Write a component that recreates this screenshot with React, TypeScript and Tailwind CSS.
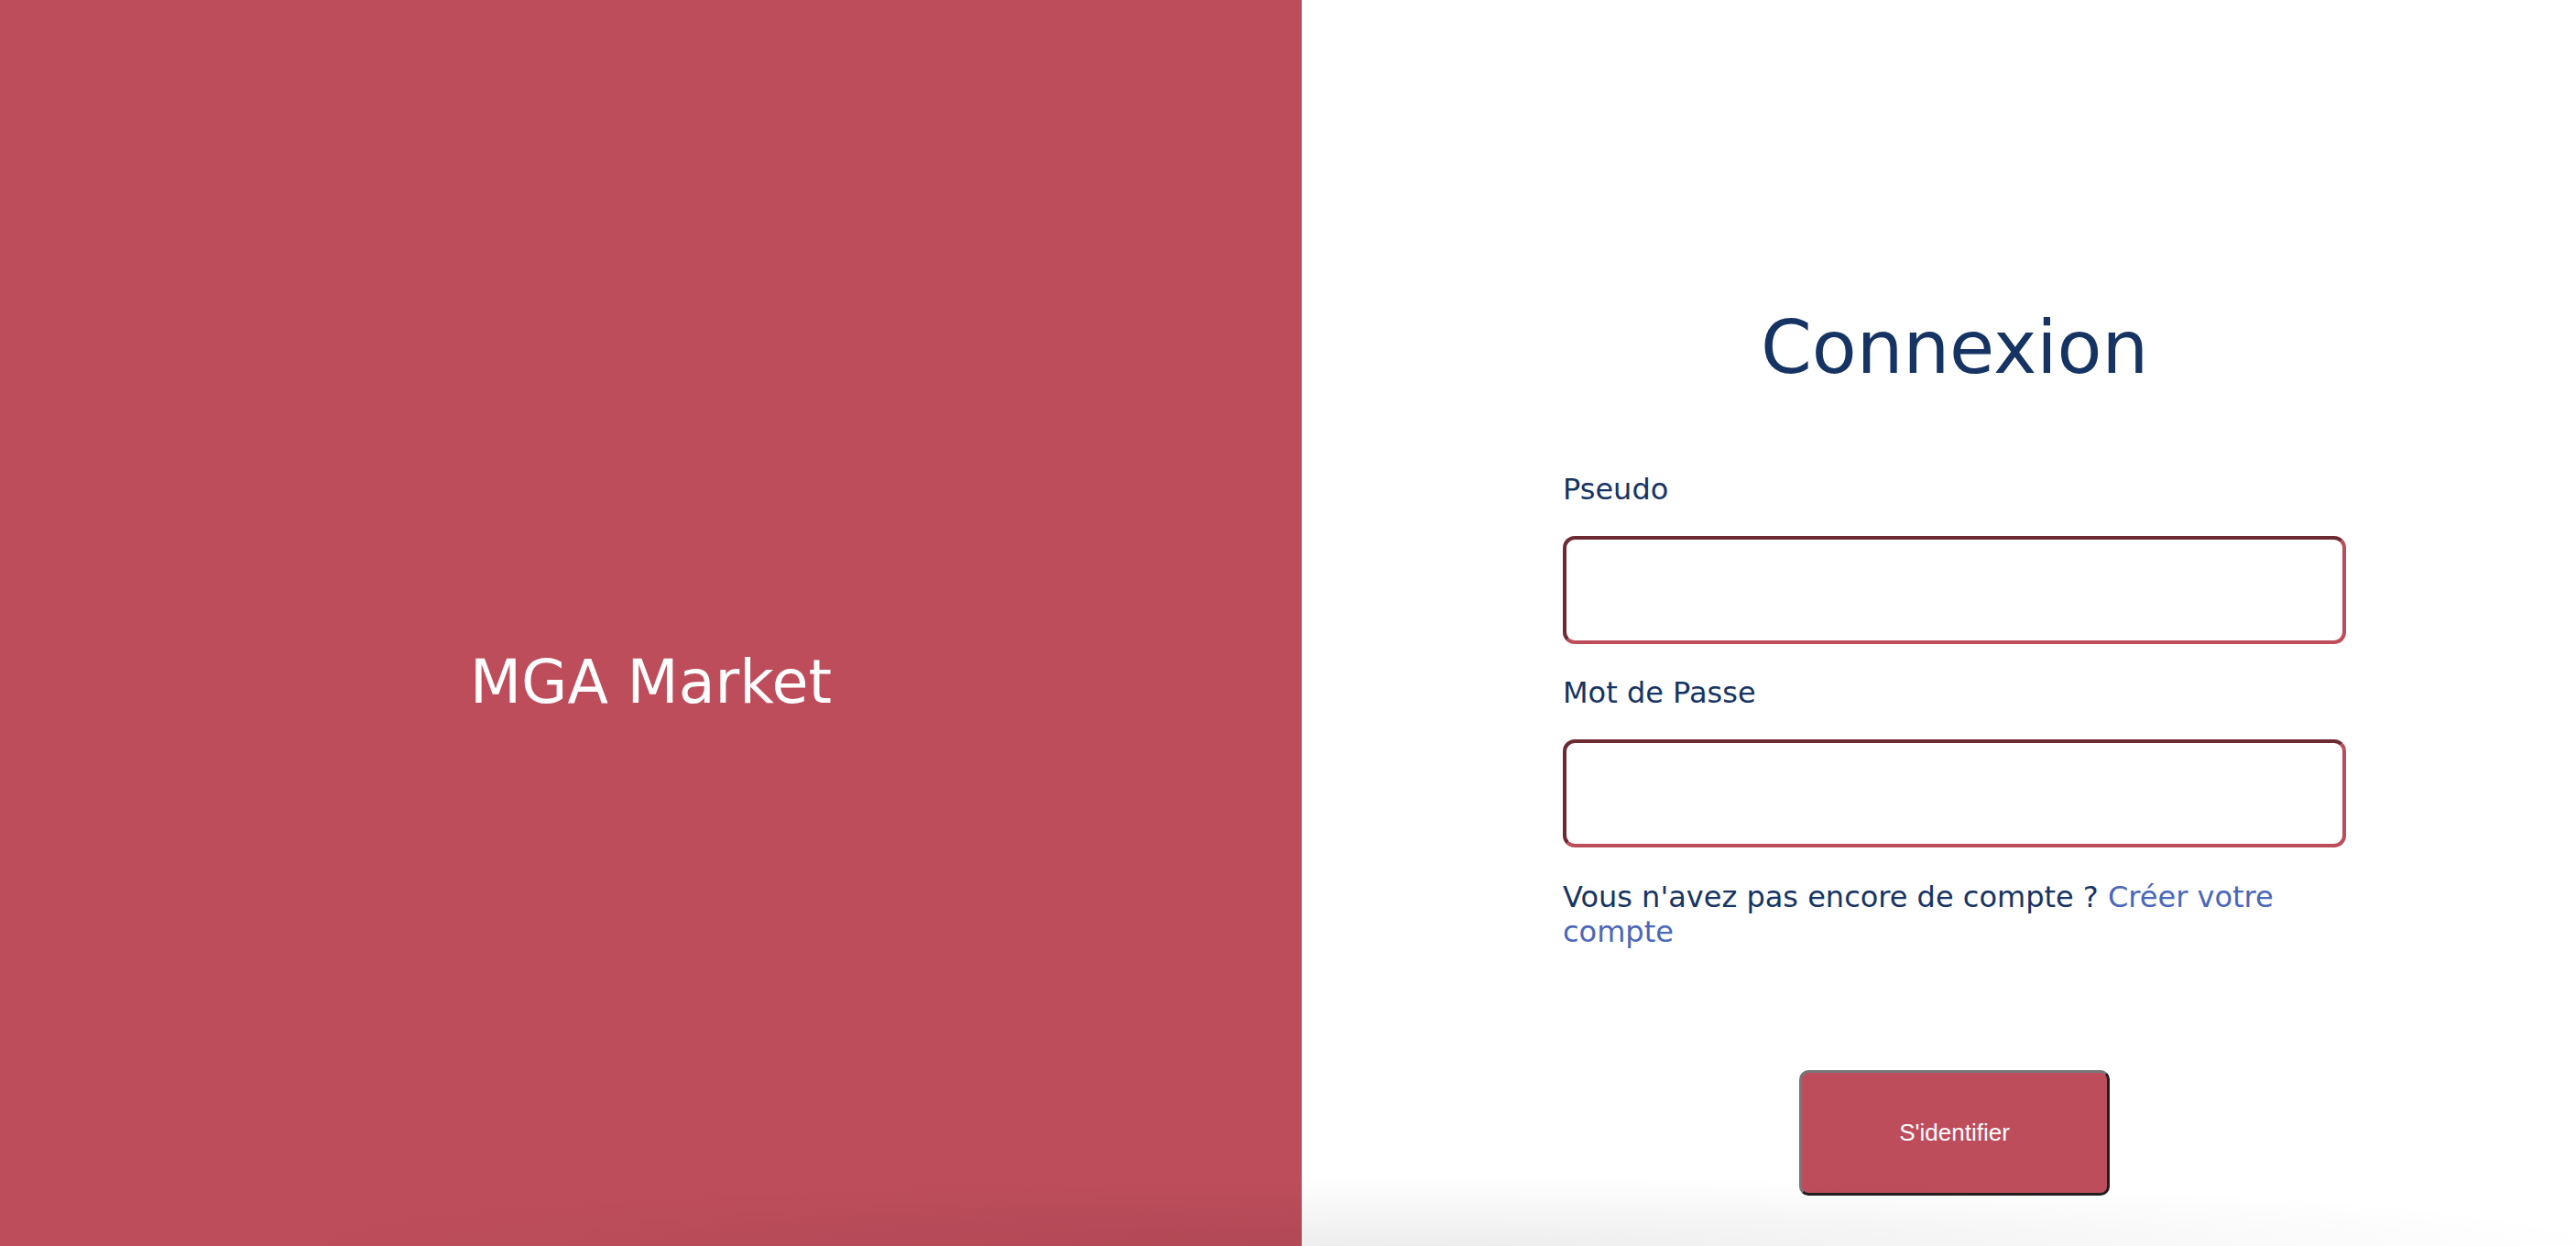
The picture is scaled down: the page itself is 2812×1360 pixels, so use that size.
export default function App() {
  return (
    <div className="relative flex h-[1360px] w-full overflow-hidden bg-white font-['DejaVu_Sans',sans-serif]">
      <aside className="flex w-[1421px] shrink-0 items-center justify-center bg-[#be4d5b] pt-[128px]">
        <h1 className="text-[65px] leading-none text-white">MGA Market</h1>
      </aside>

      <main className="flex flex-1 flex-col items-center pt-[340px] pl-[34px]">
        <h2 className="text-[80px] leading-none text-[#163463]">Connexion</h2>

        <form className="mt-[98px] flex w-[855px] flex-col">
          <label className="text-[32px] leading-none text-[#163463]">Pseudo</label>
          <input
            type="text"
            className="mt-[35px] h-[118px] w-full rounded-[13px] border-4 border-t-[#6d2a33] border-l-[#6d2a33] border-r-[#be4d5b] border-b-[#be4d5b] bg-white outline-none"
          />

          <label className="mt-[37px] text-[32px] leading-none text-[#163463]">Mot de Passe</label>
          <input
            type="password"
            className="mt-[35px] h-[118px] w-full rounded-[13px] border-4 border-t-[#6d2a33] border-l-[#6d2a33] border-r-[#be4d5b] border-b-[#be4d5b] bg-white outline-none"
          />

          <p className="mt-[35px] text-[32px] leading-[38px] text-[#163463]">
            Vous n'avez pas encore de compte ?{' '}
            <a href="#" className="text-[#4a67b9]">Créer votre compte</a>
          </p>

          <div className="mt-[132px] flex justify-center">
            <button
              type="button"
              className="h-[137px] w-[339px] rounded-[10px] border-[3px] border-t-[#777777] border-l-[#777777] border-r-[#1f1f1f] border-b-[#1f1f1f] bg-[#be4d5b] font-['Liberation_Sans',Arial,sans-serif] text-[26px] text-white"
            >
              S'identifier
            </button>
          </div>
        </form>
      </main>

      <div className="pointer-events-none absolute inset-x-0 bottom-0 h-[90px] bg-[radial-gradient(ellipse_at_55%_100%,rgba(0,0,0,0.07),rgba(0,0,0,0)_60%)]" />
    </div>
  );
}
